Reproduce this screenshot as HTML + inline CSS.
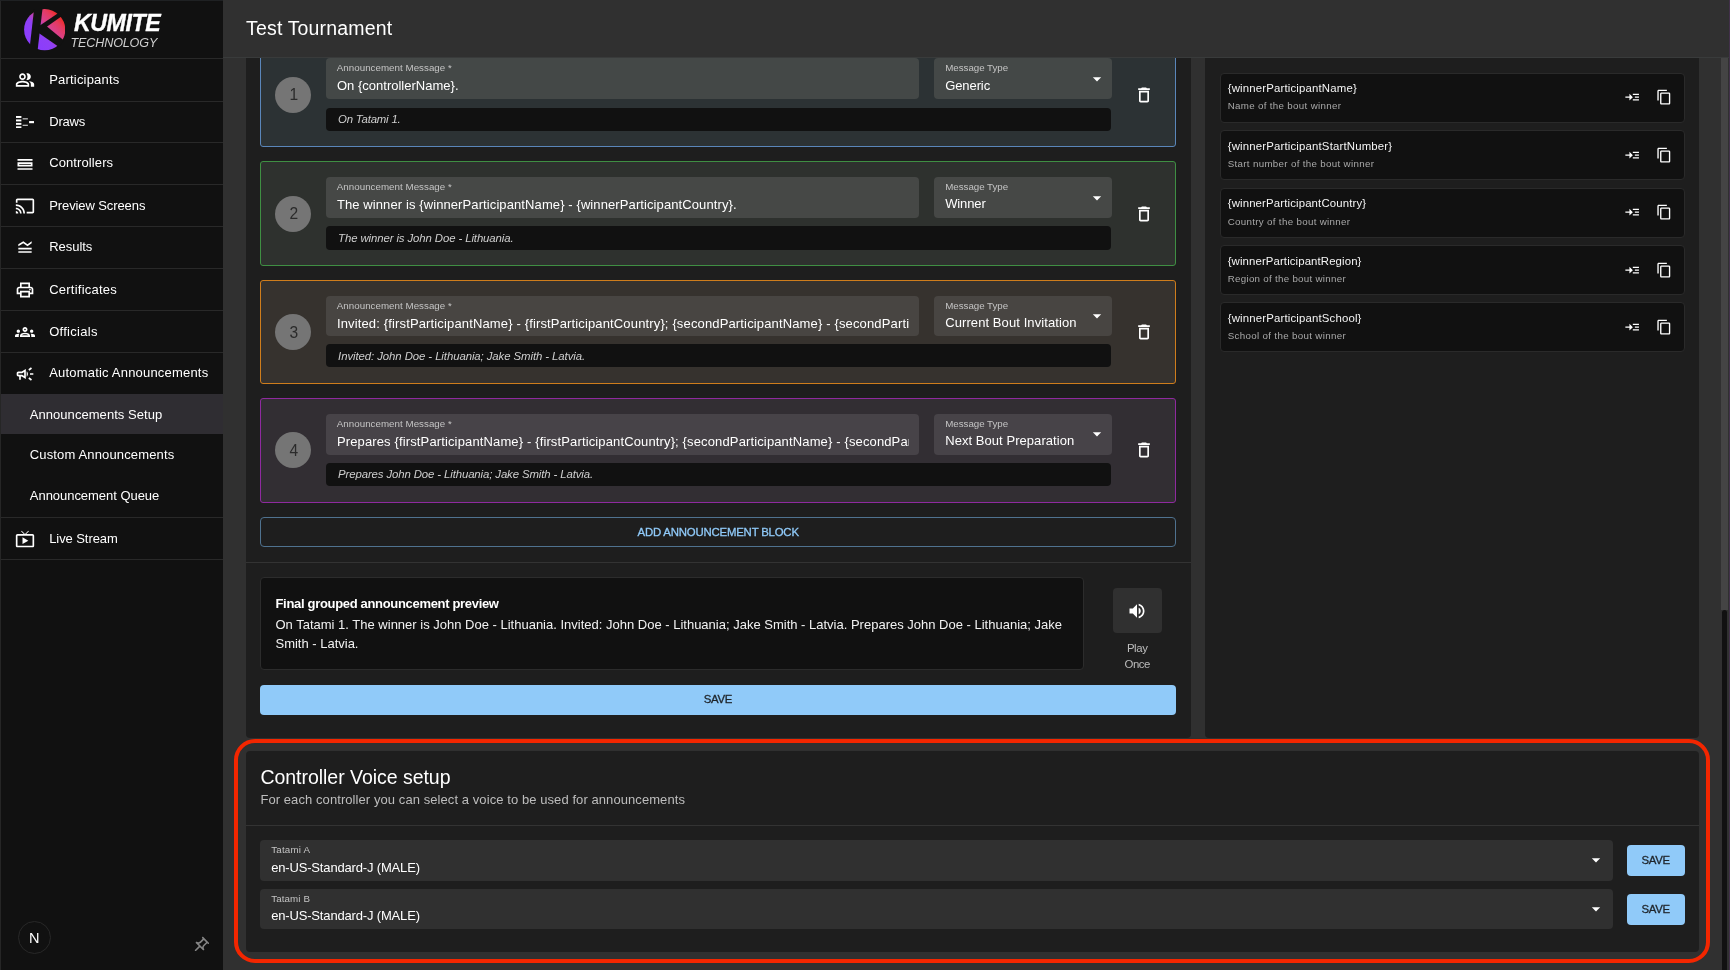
<!DOCTYPE html>
<html lang="en"><head><meta charset="utf-8"><title>Test Tournament - Announcements Setup</title>
<style>
*{margin:0;padding:0}
html,body{width:1730px;height:970px;overflow:hidden;background:#303030}
body{position:relative;font-family:"Liberation Sans",sans-serif;color:#fff}
.b,.t,.i,.inp,section,header,nav,aside,main{position:absolute}
.t{white-space:pre}
.md{-webkit-text-stroke:.3px currentColor}
.km{-webkit-text-stroke:.35px #fff}
.inp{overflow:hidden;width:572.5px;height:16px}
nav{left:0;top:0;width:223px;height:970px;background:#111}
header{left:223px;top:0;width:1507px;height:57px;background:#303030;border-bottom:1px solid #393b3b}
.card{background:#1e1e1e;border-radius:4px}
#app{position:absolute;left:0;top:0;width:1730px;height:970px;will-change:transform}
</style></head>
<body>
<div id="app">
<main>
<section>
<div class="b card" style="left:246px;top:30px;width:944.6px;height:707.6px"></div>
<div class="b" style="left:260.0px;top:42.2px;width:916.0px;height:104.9px;background:#2c3234;border:1px solid #5a86ba;border-radius:3px;box-sizing:border-box"></div>
<div class="b" style="left:275.2px;top:76.9px;width:36.2px;height:36.2px;background:#757575;border-radius:50%"></div>
<div class="b" style="left:325.8px;top:58.2px;width:593.6px;height:41.0px;background:#444847;border-radius:4px"></div>
<div class="b" style="left:934.0px;top:58.2px;width:177.9px;height:41.0px;background:#444847;border-radius:4px"></div>
<svg class="i" style="left:1087.0px;top:68.7px;width:20px;height:20px;" viewBox="0 0 24 24"><path fill="#fff" d="M7 10l5 5 5-5z"/></svg>
<div class="b" style="left:326.3px;top:107.9px;width:785.0px;height:22.9px;background:#111;border-radius:4px"></div>
<svg class="i" style="left:1133.8px;top:84.7px;width:20px;height:20px;" viewBox="0 0 24 24"><path fill="#fff" d="M6 19c0 1.100.9 2 2 2h8c1.100 0 2-.9 2-2V7H6v12zM8 9h8v10H8V9zm7.500-5l-1-1h-5l-1 1H5v2h14V4z"/></svg>
<div class="b" style="left:260.0px;top:161.0px;width:916.0px;height:105.0px;background:#2e312e;border:1px solid #3f8f43;border-radius:3px;box-sizing:border-box"></div>
<div class="b" style="left:275.2px;top:195.5px;width:36.2px;height:36.2px;background:#757575;border-radius:50%"></div>
<div class="b" style="left:325.8px;top:177.0px;width:593.6px;height:41.1px;background:#464846;border-radius:4px"></div>
<div class="b" style="left:934.0px;top:177.0px;width:177.9px;height:41.1px;background:#464846;border-radius:4px"></div>
<svg class="i" style="left:1087.0px;top:187.6px;width:20px;height:20px;" viewBox="0 0 24 24"><path fill="#fff" d="M7 10l5 5 5-5z"/></svg>
<div class="b" style="left:326.3px;top:226.1px;width:785.0px;height:23.7px;background:#111;border-radius:4px"></div>
<svg class="i" style="left:1133.8px;top:203.5px;width:20px;height:20px;" viewBox="0 0 24 24"><path fill="#fff" d="M6 19c0 1.100.9 2 2 2h8c1.100 0 2-.9 2-2V7H6v12zM8 9h8v10H8V9zm7.500-5l-1-1h-5l-1 1H5v2h14V4z"/></svg>
<div class="b" style="left:260.0px;top:280.0px;width:916.0px;height:104.3px;background:#36322e;border:1px solid #cf7d1c;border-radius:3px;box-sizing:border-box"></div>
<div class="b" style="left:275.2px;top:314.3px;width:36.2px;height:36.2px;background:#757575;border-radius:50%"></div>
<div class="b" style="left:325.8px;top:295.8px;width:593.6px;height:40.4px;background:#484542;border-radius:4px"></div>
<div class="b" style="left:934.0px;top:295.8px;width:177.9px;height:40.4px;background:#484542;border-radius:4px"></div>
<svg class="i" style="left:1087.0px;top:305.9px;width:20px;height:20px;" viewBox="0 0 24 24"><path fill="#fff" d="M7 10l5 5 5-5z"/></svg>
<div class="b" style="left:326.3px;top:344.4px;width:785.0px;height:23.1px;background:#111;border-radius:4px"></div>
<svg class="i" style="left:1133.8px;top:322.1px;width:20px;height:20px;" viewBox="0 0 24 24"><path fill="#fff" d="M6 19c0 1.100.9 2 2 2h8c1.100 0 2-.9 2-2V7H6v12zM8 9h8v10H8V9zm7.500-5l-1-1h-5l-1 1H5v2h14V4z"/></svg>
<div class="b" style="left:260.0px;top:398.0px;width:916.0px;height:104.8px;background:#322e33;border:1px solid #8f2a9f;border-radius:3px;box-sizing:border-box"></div>
<div class="b" style="left:275.2px;top:432.3px;width:36.2px;height:36.2px;background:#757575;border-radius:50%"></div>
<div class="b" style="left:325.8px;top:413.5px;width:593.6px;height:41.4px;background:#474348;border-radius:4px"></div>
<div class="b" style="left:934.0px;top:413.5px;width:177.9px;height:41.4px;background:#474348;border-radius:4px"></div>
<svg class="i" style="left:1087.0px;top:424.2px;width:20px;height:20px;" viewBox="0 0 24 24"><path fill="#fff" d="M7 10l5 5 5-5z"/></svg>
<div class="b" style="left:326.3px;top:463.2px;width:785.0px;height:23.0px;background:#111;border-radius:4px"></div>
<svg class="i" style="left:1133.8px;top:440.4px;width:20px;height:20px;" viewBox="0 0 24 24"><path fill="#fff" d="M6 19c0 1.100.9 2 2 2h8c1.100 0 2-.9 2-2V7H6v12zM8 9h8v10H8V9zm7.500-5l-1-1h-5l-1 1H5v2h14V4z"/></svg>
<div class="b" style="left:260.2px;top:517.3px;width:915.7px;height:29.9px;border:1px solid #4f728f;border-radius:4px;box-sizing:border-box"></div>
<div class="b" style="left:246.0px;top:562.2px;width:944.6px;height:1.0px;background:#333"></div>
<div class="b" style="left:260.2px;top:577.3px;width:824.2px;height:92.6px;background:#111;border:1px solid #2c2c2c;border-radius:4px;box-sizing:border-box"></div>
<div class="b" style="left:1113.2px;top:588.0px;width:48.4px;height:45.0px;background:#303030;border-radius:4px"></div>
<svg class="i" style="left:1127.4px;top:601.0px;width:20px;height:20px;" viewBox="0 0 24 24"><path fill="#fff" d="M3 9v6h4l5 5V4L7 9H3zm13.500 3c0-1.770-1.020-3.290-2.500-4.030v8.050c1.480-.73 2.500-2.250 2.500-4.020zM14 3.230v2.060c2.890.86 5 3.540 5 6.710s-2.110 5.850-5 6.710v2.060c4.010-.91 7-4.490 7-8.770s-2.990-7.860-7-8.770z"/></svg>
<div class="b" style="left:260.2px;top:684.6px;width:915.7px;height:30.4px;background:#90caf9;border-radius:4px"></div>
<div class="t" style="left:289.4px;top:87px;font-size:15.6px;line-height:15.6px;color:#2b2b2b;">1</div>
<div class="t" style="left:336.8px;top:63px;font-size:9.75px;line-height:9.75px;color:#c4c4c4;letter-spacing:0.030px;">Announcement Message *</div>
<div class="t inp" style="left:336.9px;top:79px;font-size:13px;line-height:13px;letter-spacing:0.015px;">On {controllerName}.</div>
<div class="t" style="left:945.2px;top:63px;font-size:9.75px;line-height:9.75px;color:#c4c4c4;letter-spacing:-0.021px;">Message Type</div>
<div class="t" style="left:945.2px;top:79px;font-size:13px;line-height:13px;letter-spacing:-0.089px;">Generic</div>
<div class="t" style="left:338.1px;top:114px;font-size:11.4px;line-height:11.4px;font-style:italic;color:#cfcfcf;letter-spacing:-0.200px;">On Tatami 1.</div>
<div class="t" style="left:289.4px;top:206px;font-size:15.6px;line-height:15.6px;color:#2b2b2b;">2</div>
<div class="t" style="left:336.8px;top:182px;font-size:9.75px;line-height:9.75px;color:#c4c4c4;letter-spacing:0.030px;">Announcement Message *</div>
<div class="t inp" style="left:336.9px;top:198px;font-size:13px;line-height:13px;letter-spacing:0.100px;">The winner is {winnerParticipantName} - {winnerParticipantCountry}.</div>
<div class="t" style="left:945.2px;top:182px;font-size:9.75px;line-height:9.75px;color:#c4c4c4;letter-spacing:-0.021px;">Message Type</div>
<div class="t" style="left:945.2px;top:197px;font-size:13px;line-height:13px;letter-spacing:-0.117px;">Winner</div>
<div class="t" style="left:338.1px;top:233px;font-size:11.4px;line-height:11.4px;font-style:italic;color:#cfcfcf;letter-spacing:-0.108px;">The winner is John Doe - Lithuania.</div>
<div class="t" style="left:289.4px;top:325px;font-size:15.6px;line-height:15.6px;color:#2b2b2b;">3</div>
<div class="t" style="left:336.8px;top:301px;font-size:9.75px;line-height:9.75px;color:#c4c4c4;letter-spacing:0.030px;">Announcement Message *</div>
<div class="t inp" style="left:336.9px;top:317px;font-size:13px;line-height:13px;letter-spacing:0.146px;">Invited: {firstParticipantName} - {firstParticipantCountry}; {secondParticipantName} - {secondParticipantCountry}.</div>
<div class="t" style="left:945.2px;top:301px;font-size:9.75px;line-height:9.75px;color:#c4c4c4;letter-spacing:-0.021px;">Message Type</div>
<div class="t" style="left:945.2px;top:316px;font-size:13px;line-height:13px;letter-spacing:0.088px;">Current Bout Invitation</div>
<div class="t" style="left:338.1px;top:351px;font-size:11.4px;line-height:11.4px;font-style:italic;color:#cfcfcf;letter-spacing:-0.087px;">Invited: John Doe - Lithuania; Jake Smith - Latvia.</div>
<div class="t" style="left:289.4px;top:443px;font-size:15.6px;line-height:15.6px;color:#2b2b2b;">4</div>
<div class="t" style="left:336.8px;top:419px;font-size:9.75px;line-height:9.75px;color:#c4c4c4;letter-spacing:0.030px;">Announcement Message *</div>
<div class="t inp" style="left:336.9px;top:435px;font-size:13px;line-height:13px;letter-spacing:0.136px;">Prepares {firstParticipantName} - {firstParticipantCountry}; {secondParticipantName} - {secondParticipantCountry}.</div>
<div class="t" style="left:945.2px;top:419px;font-size:9.75px;line-height:9.75px;color:#c4c4c4;letter-spacing:-0.021px;">Message Type</div>
<div class="t" style="left:945.2px;top:434px;font-size:13px;line-height:13px;letter-spacing:0.055px;">Next Bout Preparation</div>
<div class="t" style="left:338.1px;top:469px;font-size:11.4px;line-height:11.4px;font-style:italic;color:#cfcfcf;letter-spacing:-0.117px;">Prepares John Doe - Lithuania; Jake Smith - Latvia.</div>
<div class="t md" style="left:637.5px;top:527px;font-size:11.4px;line-height:11.4px;color:#90caf9;letter-spacing:-0.196px;">ADD ANNOUNCEMENT BLOCK</div>
<div class="t" style="left:275.5px;top:597px;font-size:13px;line-height:13px;font-weight:700;letter-spacing:-0.320px;">Final grouped announcement preview</div>
<div class="t" style="left:275.5px;top:618px;font-size:13px;line-height:13px;color:#f2f2f2;">On Tatami 1. The winner is John Doe - Lithuania. Invited: John Doe - Lithuania; Jake Smith - Latvia. Prepares John Doe - Lithuania; Jake</div>
<div class="t" style="left:275.5px;top:637px;font-size:13px;line-height:13px;color:#f2f2f2;letter-spacing:-0.007px;">Smith - Latvia.</div>
<div class="t" style="left:1126.9px;top:643px;font-size:11.4px;line-height:11.4px;color:#bdbdbd;letter-spacing:-0.391px;">Play</div>
<div class="t" style="left:1124.5px;top:659px;font-size:11.4px;line-height:11.4px;color:#bdbdbd;letter-spacing:-0.478px;">Once</div>
<div class="t md" style="left:703.8px;top:694px;font-size:11.4px;line-height:11.4px;color:#1f2429;letter-spacing:-0.316px;">SAVE</div>
</section>
<aside>
<div class="b card" style="left:1205.3px;top:30px;width:493.4px;height:707.6px"></div>
<div class="b" style="left:1219.6px;top:72.6px;width:465.1px;height:50.0px;background:#111;border:1px solid #2a2a2a;border-radius:4px;box-sizing:border-box"></div>
<svg class="i" style="left:1623.5px;top:89.3px;width:16.3px;height:16.3px;" viewBox="0 0 24 24"><path fill="#fff" d="M13 7h9v2h-9zm0 8h9v2h-9zm3-4h6v2h-6zm-3 1L8 7v4H2v2h6v4z"/></svg>
<svg class="i" style="left:1655.8px;top:89.3px;width:16.3px;height:16.3px;" viewBox="0 0 24 24"><path fill="#fff" d="M16 1H4c-1.100 0-2 .9-2 2v14h2V3h12V1zm3 4H8c-1.100 0-2 .9-2 2v14c0 1.100.9 2 2 2h11c1.100 0 2-.9 2-2V7c0-1.100-.9-2-2-2zm0 16H8V7h11v14z"/></svg>
<div class="b" style="left:1219.6px;top:130.1px;width:465.1px;height:50.0px;background:#111;border:1px solid #2a2a2a;border-radius:4px;box-sizing:border-box"></div>
<svg class="i" style="left:1623.5px;top:146.8px;width:16.3px;height:16.3px;" viewBox="0 0 24 24"><path fill="#fff" d="M13 7h9v2h-9zm0 8h9v2h-9zm3-4h6v2h-6zm-3 1L8 7v4H2v2h6v4z"/></svg>
<svg class="i" style="left:1655.8px;top:146.8px;width:16.3px;height:16.3px;" viewBox="0 0 24 24"><path fill="#fff" d="M16 1H4c-1.100 0-2 .9-2 2v14h2V3h12V1zm3 4H8c-1.100 0-2 .9-2 2v14c0 1.100.9 2 2 2h11c1.100 0 2-.9 2-2V7c0-1.100-.9-2-2-2zm0 16H8V7h11v14z"/></svg>
<div class="b" style="left:1219.6px;top:187.5px;width:465.1px;height:50.0px;background:#111;border:1px solid #2a2a2a;border-radius:4px;box-sizing:border-box"></div>
<svg class="i" style="left:1623.5px;top:204.2px;width:16.3px;height:16.3px;" viewBox="0 0 24 24"><path fill="#fff" d="M13 7h9v2h-9zm0 8h9v2h-9zm3-4h6v2h-6zm-3 1L8 7v4H2v2h6v4z"/></svg>
<svg class="i" style="left:1655.8px;top:204.2px;width:16.3px;height:16.3px;" viewBox="0 0 24 24"><path fill="#fff" d="M16 1H4c-1.100 0-2 .9-2 2v14h2V3h12V1zm3 4H8c-1.100 0-2 .9-2 2v14c0 1.100.9 2 2 2h11c1.100 0 2-.9 2-2V7c0-1.100-.9-2-2-2zm0 16H8V7h11v14z"/></svg>
<div class="b" style="left:1219.6px;top:245.0px;width:465.1px;height:50.0px;background:#111;border:1px solid #2a2a2a;border-radius:4px;box-sizing:border-box"></div>
<svg class="i" style="left:1623.5px;top:261.7px;width:16.3px;height:16.3px;" viewBox="0 0 24 24"><path fill="#fff" d="M13 7h9v2h-9zm0 8h9v2h-9zm3-4h6v2h-6zm-3 1L8 7v4H2v2h6v4z"/></svg>
<svg class="i" style="left:1655.8px;top:261.7px;width:16.3px;height:16.3px;" viewBox="0 0 24 24"><path fill="#fff" d="M16 1H4c-1.100 0-2 .9-2 2v14h2V3h12V1zm3 4H8c-1.100 0-2 .9-2 2v14c0 1.100.9 2 2 2h11c1.100 0 2-.9 2-2V7c0-1.100-.9-2-2-2zm0 16H8V7h11v14z"/></svg>
<div class="b" style="left:1219.6px;top:302.4px;width:465.1px;height:50.0px;background:#111;border:1px solid #2a2a2a;border-radius:4px;box-sizing:border-box"></div>
<svg class="i" style="left:1623.5px;top:319.1px;width:16.3px;height:16.3px;" viewBox="0 0 24 24"><path fill="#fff" d="M13 7h9v2h-9zm0 8h9v2h-9zm3-4h6v2h-6zm-3 1L8 7v4H2v2h6v4z"/></svg>
<svg class="i" style="left:1655.8px;top:319.1px;width:16.3px;height:16.3px;" viewBox="0 0 24 24"><path fill="#fff" d="M16 1H4c-1.100 0-2 .9-2 2v14h2V3h12V1zm3 4H8c-1.100 0-2 .9-2 2v14c0 1.100.9 2 2 2h11c1.100 0 2-.9 2-2V7c0-1.100-.9-2-2-2zm0 16H8V7h11v14z"/></svg>
<div class="t" style="left:1227.7px;top:83px;font-size:11.4px;line-height:11.4px;color:#f5f5f5;letter-spacing:0.165px;">{winnerParticipantName}</div>
<div class="t" style="left:1227.7px;top:101px;font-size:9.75px;line-height:9.75px;color:#a9a9a9;letter-spacing:0.321px;">Name of the bout winner</div>
<div class="t" style="left:1227.7px;top:141px;font-size:11.4px;line-height:11.4px;color:#f5f5f5;letter-spacing:0.167px;">{winnerParticipantStartNumber}</div>
<div class="t" style="left:1227.7px;top:159px;font-size:9.75px;line-height:9.75px;color:#a9a9a9;letter-spacing:0.321px;">Start number of the bout winner</div>
<div class="t" style="left:1227.7px;top:198px;font-size:11.4px;line-height:11.4px;color:#f5f5f5;letter-spacing:0.141px;">{winnerParticipantCountry}</div>
<div class="t" style="left:1227.7px;top:217px;font-size:9.75px;line-height:9.75px;color:#a9a9a9;letter-spacing:0.318px;">Country of the bout winner</div>
<div class="t" style="left:1227.7px;top:256px;font-size:11.4px;line-height:11.4px;color:#f5f5f5;letter-spacing:0.109px;">{winnerParticipantRegion}</div>
<div class="t" style="left:1227.7px;top:274px;font-size:9.75px;line-height:9.75px;color:#a9a9a9;letter-spacing:0.286px;">Region of the bout winner</div>
<div class="t" style="left:1227.7px;top:313px;font-size:11.4px;line-height:11.4px;color:#f5f5f5;letter-spacing:0.162px;">{winnerParticipantSchool}</div>
<div class="t" style="left:1227.7px;top:331px;font-size:9.75px;line-height:9.75px;color:#a9a9a9;letter-spacing:0.332px;">School of the bout winner</div>
</aside>
<section>
<div class="b" style="left:234.3px;top:738.9px;width:1476px;height:223.8px;border:4px solid #f32600;border-radius:21px;box-sizing:border-box"></div>
<div class="b card" style="left:246px;top:750.8px;width:1452.8px;height:200.8px"></div>
<div class="b" style="left:246.0px;top:824.6px;width:1452.8px;height:1.0px;background:#333"></div>
<div class="b" style="left:260.2px;top:840.0px;width:1352.6px;height:41.4px;background:#303030;border-radius:4px"></div>
<svg class="i" style="left:1586.3px;top:849.6px;width:20px;height:20px;" viewBox="0 0 24 24"><path fill="#fff" d="M7 10l5 5 5-5z"/></svg>
<div class="b" style="left:1627.0px;top:845.4px;width:58.0px;height:30.8px;background:#90caf9;border-radius:4px"></div>
<div class="b" style="left:260.2px;top:889.0px;width:1352.6px;height:40.0px;background:#303030;border-radius:4px"></div>
<svg class="i" style="left:1586.3px;top:898.6px;width:20px;height:20px;" viewBox="0 0 24 24"><path fill="#fff" d="M7 10l5 5 5-5z"/></svg>
<div class="b" style="left:1627.0px;top:894.4px;width:58.0px;height:30.8px;background:#90caf9;border-radius:4px"></div>
<div class="t" style="left:260.4px;top:768px;font-size:19.5px;line-height:19.5px;letter-spacing:-0.032px;">Controller Voice setup</div>
<div class="t" style="left:260.4px;top:793px;font-size:13px;line-height:13px;color:#bdbdbd;letter-spacing:0.077px;">For each controller you can select a voice to be used for announcements</div>
<div class="t" style="left:271.2px;top:845px;font-size:9.75px;line-height:9.75px;color:#c4c4c4;letter-spacing:0.199px;">Tatami A</div>
<div class="t" style="left:271.2px;top:861px;font-size:13px;line-height:13px;letter-spacing:-0.166px;">en-US-Standard-J (MALE)</div>
<div class="t md" style="left:1641.6px;top:855px;font-size:11.4px;line-height:11.4px;color:#1f2429;letter-spacing:-0.382px;">SAVE</div>
<div class="t" style="left:271.2px;top:894px;font-size:9.75px;line-height:9.75px;color:#c4c4c4;letter-spacing:0.123px;">Tatami B</div>
<div class="t" style="left:271.2px;top:909px;font-size:13px;line-height:13px;letter-spacing:-0.166px;">en-US-Standard-J (MALE)</div>
<div class="t md" style="left:1641.6px;top:904px;font-size:11.4px;line-height:11.4px;color:#1f2429;letter-spacing:-0.382px;">SAVE</div>
</section>
</main>
<header>
</header>
<div class="t" style="left:246.1px;top:19px;font-size:19.5px;line-height:19.5px;letter-spacing:0.156px;">Test Tournament</div>
<div class="b" style="left:1721px;top:58px;width:7px;height:552px;background:#444"></div>
<div class="b" style="left:1722px;top:610px;width:5px;height:365px;background:#111;border-radius:3px"></div>
<div class="b" style="left:1729px;top:0;width:1px;height:970px;background:#42304a"></div>
<nav>
<svg class="i" style="left:15.0px;top:70.0px;width:20px;height:20px;" viewBox="0 0 24 24"><path fill="#fff" d="M16.67 13.13C18.04 14.06 19 15.32 19 17v3h4v-3c0-2.18-3.57-3.47-6.33-3.87zM15 12c2.21 0 4-1.79 4-4s-1.79-4-4-4c-.47 0-.91.1-1.33.24C14.5 5.27 15 6.58 15 8s-.5 2.73-1.33 3.76c.42.14.86.24 1.33.24zM9 12c2.21 0 4-1.79 4-4s-1.79-4-4-4-4 1.79-4 4 1.79 4 4 4zm0-6c1.1 0 2 .9 2 2s-.9 2-2 2-2-.9-2-2 .9-2 2-2zm0 7c-2.67 0-8 1.34-8 4v3h16v-3c0-2.66-5.33-4-8-4zm6 5H3v-.99C3.2 16.29 6.3 15 9 15s5.8 1.29 6 2v1z"/></svg>
<svg class="i" style="left:15.8px;top:115.8px;width:18.4px;height:12.3px" viewBox="0 0 18.4 12.3" fill="#fff"><rect x="0" y="0.00" width="5.4" height="1.95"/><rect x="0" y="3.45" width="5.4" height="1.95"/><rect x="0" y="6.90" width="5.4" height="1.95"/><rect x="0" y="10.35" width="5.4" height="1.95"/><rect x="6.6" y="2.2" width="5.3" height="1.25" opacity=".75"/><rect x="6.6" y="8.7" width="5.3" height="1.25" opacity=".75"/><rect x="13.1" y="5.05" width="5.3" height="2.15"/></svg>
<svg class="i" style="left:15.0px;top:153.6px;width:20px;height:20px;" viewBox="0 0 24 24"><path fill="#fff" d="M3 17h18v2H3v-2zm16-5v1H5v-1h14m2-2H3v5h18v-5zM3 6h18v2H3V6z"/></svg>
<svg class="i" style="left:15.0px;top:195.8px;width:20px;height:20px;" viewBox="0 0 24 24"><path fill="#fff" d="M21 3H3c-1.1 0-2 .9-2 2v3h2V5h18v14h-7v2h7c1.1 0 2-.9 2-2V5c0-1.1-.9-2-2-2zM1 18v3h3c0-1.660-1.340-3-3-3zm0-4v2c2.760 0 5 2.240 5 5h2c0-3.870-3.130-7-7-7zm0-4v2c4.970 0 9 4.030 9 9h2c0-6.080-4.930-11-11-11z"/></svg>
<svg class="i" style="left:15.0px;top:237.4px;width:20px;height:20px;" viewBox="0 0 24 24"><path fill="#fff" d="M20 15H4v-2h16v2zm0 2H4v2h16v-2zm-5-6 5-3.550V5l-5 3.550L10 5 4 8.660V11l5.920-3.610L15 11z"/></svg>
<svg class="i" style="left:15.0px;top:279.5px;width:20px;height:20px;" viewBox="0 0 24 24"><path fill="#fff" d="M19 8h-1V3H6v5H5c-1.660 0-3 1.340-3 3v6h4v4h12v-4h4v-6c0-1.660-1.340-3-3-3zM8 5h8v3H8V5zm8 12v2H8v-4h8v2zm2-2v-2H6v2H4v-4c0-.55.45-1 1-1h14c.55 0 1 .45 1 1v4h-2z M17 11.5a1 1 0 1 0 2 0a1 1 0 1 0 -2 0z"/></svg>
<svg class="i" style="left:15.0px;top:322.1px;width:20px;height:20px;" viewBox="0 0 24 24"><path fill="#fff" d="M4 13c1.1 0 2-.9 2-2s-.9-2-2-2-2 .9-2 2 .9 2 2 2zm1.130 1.100c-.37-.06-.74-.1-1.130-.1-.99 0-1.930.21-2.780.58C.48 14.900 0 15.620 0 16.430V18h4.500v-1.610c0-.83.23-1.610.63-2.290zM20 13c1.100 0 2-.9 2-2s-.9-2-2-2-2 .9-2 2 .9 2 2 2zm4 3.430c0-.81-.48-1.530-1.220-1.850-.85-.37-1.790-.58-2.780-.58-.39 0-.76.04-1.130.1.4.68.63 1.460.63 2.290V18H24v-1.570zm-7.760-2.780c-1.170-.52-2.610-.9-4.240-.9-1.630 0-3.070.39-4.240.9C6.680 14.130 6 15.210 6 16.390V18h12v-1.610c0-1.180-.68-2.260-1.760-2.740zM8.070 16c.09-.23.13-.39.91-.69.97-.38 1.990-.56 3.020-.56s2.050.18 3.020.56c.77.3.81.46.91.69H8.070zM12 8c.55 0 1 .45 1 1s-.45 1-1 1-1-.45-1-1 .45-1 1-1m0-2c-1.660 0-3 1.340-3 3s1.340 3 3 3 3-1.340 3-3-1.340-3-3-3z"/></svg>
<svg class="i" style="left:15.0px;top:363.5px;width:20px;height:20px;" viewBox="0 0 24 24"><path fill="#fff" d="M18 11v2h4v-2h-4zm-2 6.610c.96.71 2.210 1.650 3.200 2.390.4-.53.8-1.070 1.200-1.600-.99-.74-2.240-1.680-3.200-2.400-.4.54-.8 1.080-1.200 1.610zM20.400 5.600c-.4-.53-.8-1.070-1.200-1.600-.99.74-2.240 1.680-3.200 2.400.4.53.8 1.070 1.200 1.600.96-.72 2.210-1.650 3.200-2.400zM4 9c-1.100 0-2 .9-2 2v2c0 1.100.9 2 2 2h1v4h2v-4h1l5 3V6L8 9H4zm5.030 1.710L11 9.530v4.940l-1.970-1.180-.48-.29H4v-2h4.550l.48-.29zM15.500 12c0-1.330-.58-2.530-1.500-3.350v6.690c.92-.81 1.500-2.010 1.500-3.340z"/></svg>
<div class="b" style="left:1.0px;top:58.4px;width:222.0px;height:1.0px;background:#292929"></div>
<div class="b" style="left:1.0px;top:100.6px;width:222.0px;height:1.0px;background:#292929"></div>
<div class="b" style="left:1.0px;top:141.9px;width:222.0px;height:1.0px;background:#292929"></div>
<div class="b" style="left:1.0px;top:184.3px;width:222.0px;height:1.0px;background:#292929"></div>
<div class="b" style="left:1.0px;top:225.8px;width:222.0px;height:1.0px;background:#292929"></div>
<div class="b" style="left:1.0px;top:267.7px;width:222.0px;height:1.0px;background:#292929"></div>
<div class="b" style="left:1.0px;top:310.3px;width:222.0px;height:1.0px;background:#292929"></div>
<div class="b" style="left:1.0px;top:352.0px;width:222.0px;height:1.0px;background:#292929"></div>
<div class="b" style="left:1.0px;top:517.2px;width:222.0px;height:1.0px;background:#292929"></div>
<div class="b" style="left:1.0px;top:558.8px;width:222.0px;height:1.0px;background:#292929"></div>
<div class="b" style="left:0.0px;top:0.0px;width:1.0px;height:970.0px;background:#262626"></div>
<div class="b" style="left:0.0px;top:0.0px;width:223.0px;height:1.0px;background:#1f2123"></div>
<div class="b" style="left:1.0px;top:394.0px;width:222.0px;height:40.4px;background:#2f2d32"></div>
<svg class="i" style="left:15.0px;top:529.0px;width:20px;height:20px;" viewBox="0 0 24 24"><path fill="#fff" d="M9 10v8l7-4zm12-4h-7.580l3.290-3.290L16 2l-4 4h-.03l-4-4-.69.71L10.560 6H3c-1.100 0-2 .89-2 2v12c0 1.100.9 2 2 2h18c1.100 0 2-.9 2-2V8c0-1.110-.9-2-2-2zm0 14H3V8h18v12z"/></svg>
<svg class="i" style="left:23.9px;top:9.3px;width:41.4px;height:41.4px" viewBox="0 0 41.4 41.4">
<defs><linearGradient id="lg" x1="0.1" y1="0.85" x2="0.9" y2="0.1"><stop offset="0" stop-color="#8a3cff"/><stop offset="0.38" stop-color="#8f40f5"/><stop offset="0.6" stop-color="#d9418f"/><stop offset="0.8" stop-color="#e63a5e"/><stop offset="1" stop-color="#f4230c"/></linearGradient></defs>
<circle cx="20.7" cy="20.7" r="20.6" fill="url(#lg)"/>
<polygon points="10.2,-1 18.6,-1 13.4,43 5.2,43" fill="#111"/>
<polygon points="15.5,16.8 35.5,3.2 38,7 17.5,21.5" fill="#111"/>
<polygon points="14.5,17.5 20.5,15.5 40,31.5 35,38 14,23.5" fill="#111"/>
</svg>
<div class="b" style="left:17.6px;top:920.8px;width:33.2px;height:33.2px;border-radius:50%;border:1px solid #282828;box-sizing:border-box;background:#111"></div>
<svg class="i" style="left:190.9px;top:936.4px;width:19px;height:19px;transform:rotate(45deg)" viewBox="0 0 24 24"><path fill="#858585" d="M14 4v5c0 1.120.37 2.160 1 3H9c.65-.86 1-1.900 1-3V4h4m3-2H7c-.55 0-1 .45-1 1s.45 1 1 1h1v5c0 1.660-1.340 3-3 3v2h5.970v7l1 1 1-1v-7H19v-2c-1.660 0-3-1.340-3-3V4h1c.55 0 1-.45 1-1s-.45-1-1-1z"/></svg>
<div class="t" style="left:49.2px;top:73px;font-size:13px;line-height:13px;letter-spacing:0.198px;">Participants</div>
<div class="t" style="left:49.2px;top:115px;font-size:13px;line-height:13px;letter-spacing:-0.186px;">Draws</div>
<div class="t" style="left:49.2px;top:156px;font-size:13px;line-height:13px;letter-spacing:0.104px;">Controllers</div>
<div class="t" style="left:49.2px;top:199px;font-size:13px;line-height:13px;letter-spacing:-0.096px;">Preview Screens</div>
<div class="t" style="left:49.2px;top:240px;font-size:13px;line-height:13px;letter-spacing:-0.027px;">Results</div>
<div class="t" style="left:49.2px;top:283px;font-size:13px;line-height:13px;letter-spacing:0.234px;">Certificates</div>
<div class="t" style="left:49.2px;top:325px;font-size:13px;line-height:13px;letter-spacing:0.275px;">Officials</div>
<div class="t" style="left:49.2px;top:366px;font-size:13px;line-height:13px;letter-spacing:0.197px;">Automatic Announcements</div>
<div class="t" style="left:29.8px;top:408px;font-size:13px;line-height:13px;letter-spacing:0.047px;">Announcements Setup</div>
<div class="t" style="left:29.8px;top:448px;font-size:13px;line-height:13px;letter-spacing:0.145px;">Custom Announcements</div>
<div class="t" style="left:29.8px;top:489px;font-size:13px;line-height:13px;letter-spacing:-0.036px;">Announcement Queue</div>
<div class="t" style="left:49.2px;top:532px;font-size:13px;line-height:13px;letter-spacing:-0.078px;">Live Stream</div>
<div class="t km" style="left:73.9px;top:12px;font-size:23.2px;line-height:23.2px;font-weight:700;font-style:italic;letter-spacing:-0.398px;transform:scaleY(1.07);transform-origin:0 19px;">KUMITE</div>
<div class="t" style="left:70.6px;top:37px;font-size:12.6px;line-height:12.6px;font-style:italic;color:#d0d0d0;letter-spacing:-0.164px;transform:scaleY(1.07);transform-origin:0 10px;">TECHNOLOGY</div>
<div class="t" style="left:28.9px;top:931px;font-size:14.5px;line-height:14.5px;">N</div>
</nav>
</div>
</body></html>
